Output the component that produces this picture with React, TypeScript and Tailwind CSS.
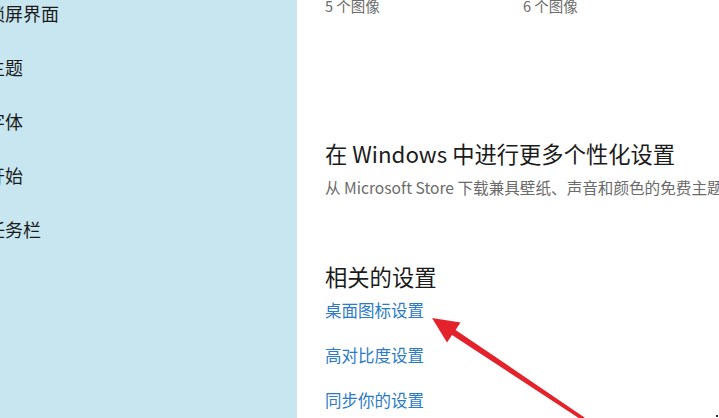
const font = { fontFamily: '"Noto Sans CJK SC", "Noto Sans", sans-serif' }

const navItems = ["锁屏界面", "主题", "字体", "开始", "任务栏"]
const links = ["桌面图标设置", "高对比度设置", "同步你的设置"]

function Arrow() {
  return (
    <svg className="absolute left-0 top-0 pointer-events-none" width="719" height="418" viewBox="0 0 719 418">
      <polygon
        fill="#e3222b"
        points="432,318 460.5,322.5 455.6,329.9 584.5,417.5 582.5,420.5 452,334.9 447,342.5"
      />
      <rect x="716" y="415" width="2" height="2" fill="#333" />
    </svg>
  )
}

export default function App() {
  return (
    <div className="relative flex w-[719px] h-[418px] overflow-hidden bg-white" style={font}>
      <aside className="w-[297px] shrink-0 bg-[#c8e6f0] overflow-hidden">
        <ul className="-ml-[13px] mt-[2px] flex flex-col gap-[32px] text-[18px] leading-[22px] text-[#1b1b1b]">
          {navItems.map((item) => (
            <li key={item} className="whitespace-nowrap">{item}</li>
          ))}
        </ul>
      </aside>

      <main className="flex-1 pl-[28px] overflow-hidden">
        <div className="-mt-[4px] flex text-[14.5px] leading-[20px] text-[#6b6b6b]">
          <span className="w-[198px]">5 个图像</span>
          <span>6 个图像</span>
        </div>

        <h2 className="mt-[122px] text-[22.3px] leading-[30px] text-[#1b1b1b] whitespace-nowrap">
          在 Windows 中进行更多个性化设置
        </h2>
        <p className="mt-[8px] text-[15.6px] leading-[22px] text-[#6b6b6b] whitespace-nowrap">
          从 Microsoft Store 下载兼具壁纸、声音和颜色的免费主题
        </p>

        <h2 className="mt-[63px] text-[22.3px] leading-[30px] text-[#1b1b1b]">相关的设置</h2>
        <div className="mt-[8px] flex flex-col gap-[23px] text-[16.5px] leading-[22px] text-[#2b7bc8]">
          {links.map((l) => (
            <a key={l} className="whitespace-nowrap">{l}</a>
          ))}
        </div>
      </main>

      <Arrow />
    </div>
  )
}
